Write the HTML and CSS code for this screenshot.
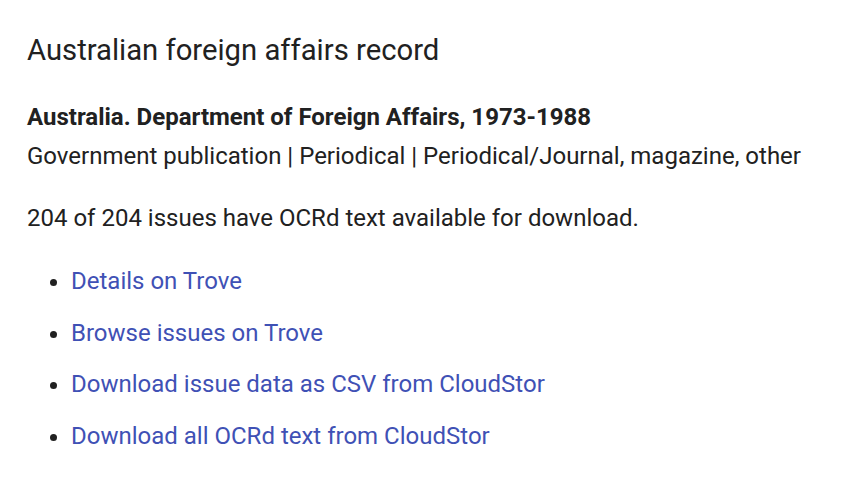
FILE: index.html
```html
<!DOCTYPE html>
<html lang="en">
<head>
<meta charset="utf-8">
<title>Australian foreign affairs record</title>
<link rel="stylesheet" href="styles.css">
</head>
<body>
<main class="record">
  <h1 class="title">Australian foreign affairs record</h1>
  <p class="publisher">Australia. Department of Foreign Affairs, 1973-1988</p>
  <p class="format">Government publication | Periodical | Periodical/Journal, magazine, other</p>
  <p class="summary">204 of 204 issues have OCRd text available for download.</p>
  <ul class="links">
    <li><a href="#">Details on Trove</a></li>
    <li><a href="#">Browse issues on Trove</a></li>
    <li><a href="#">Download issue data as CSV from CloudStor</a></li>
    <li><a href="#">Download all OCRd text from CloudStor</a></li>
  </ul>
</main>
</body>
</html>
```
FILE: styles.css
```css
html, body {
  margin: 0;
  padding: 0;
  background: #ffffff;
}
body {
  font-family: Roboto, "Liberation Sans", sans-serif;
  color: #212121;
}
.record {
  padding: 28px 27px 0 27px;
}
.title {
  font-size: 29.25px;
  font-weight: 400;
  line-height: 44px;
  margin: 0 0 26px 0;
}
.publisher {
  font-size: 24px;
  font-weight: 700;
  line-height: 39px;
  margin: 0;
}
.format {
  font-size: 24px;
  line-height: 39px;
  margin: 0 0 23px 0;
}
.summary {
  font-size: 24px;
  line-height: 39px;
  margin: 0 0 25px 0;
}
.links {
  margin: 0;
  padding-left: 44px;
  font-size: 24px;
}
.links li {
  line-height: 36px;
  margin-bottom: 15.67px;
}
.links a {
  color: #3f51b5;
  text-decoration: none;
}
```
